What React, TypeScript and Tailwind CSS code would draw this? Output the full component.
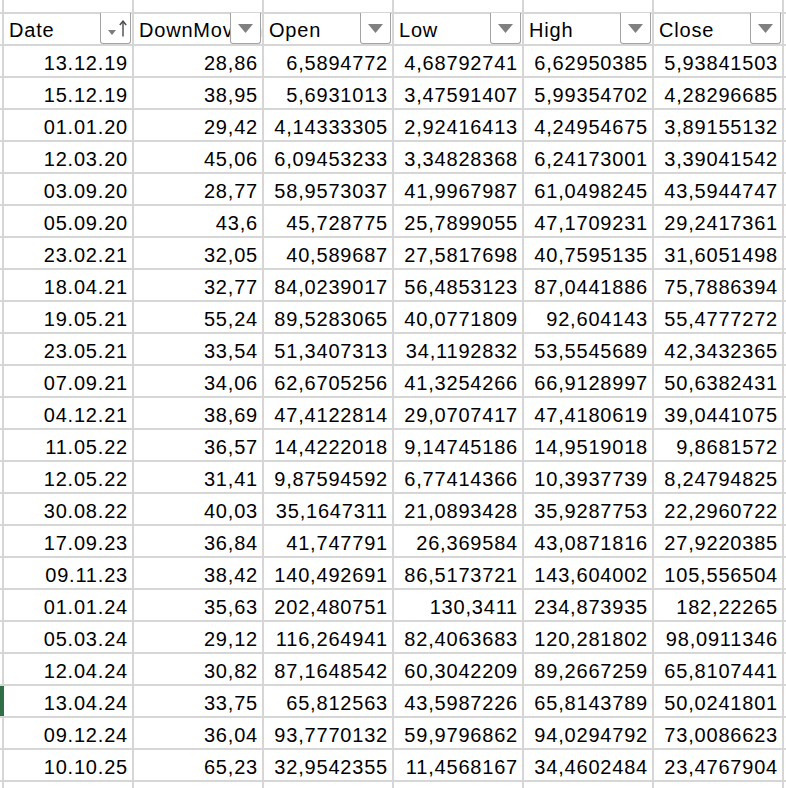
const columns = ['Date', 'DownMovement', 'Open', 'Low', 'High', 'Close']

const rows: string[][] = [
  ['13.12.19', '28,86', '6,5894772', '4,68792741', '6,62950385', '5,93841503'],
  ['15.12.19', '38,95', '5,6931013', '3,47591407', '5,99354702', '4,28296685'],
  ['01.01.20', '29,42', '4,14333305', '2,92416413', '4,24954675', '3,89155132'],
  ['12.03.20', '45,06', '6,09453233', '3,34828368', '6,24173001', '3,39041542'],
  ['03.09.20', '28,77', '58,9573037', '41,9967987', '61,0498245', '43,5944747'],
  ['05.09.20', '43,6', '45,728775', '25,7899055', '47,1709231', '29,2417361'],
  ['23.02.21', '32,05', '40,589687', '27,5817698', '40,7595135', '31,6051498'],
  ['18.04.21', '32,77', '84,0239017', '56,4853123', '87,0441886', '75,7886394'],
  ['19.05.21', '55,24', '89,5283065', '40,0771809', '92,604143', '55,4777272'],
  ['23.05.21', '33,54', '51,3407313', '34,1192832', '53,5545689', '42,3432365'],
  ['07.09.21', '34,06', '62,6705256', '41,3254266', '66,9128997', '50,6382431'],
  ['04.12.21', '38,69', '47,4122814', '29,0707417', '47,4180619', '39,0441075'],
  ['11.05.22', '36,57', '14,4222018', '9,14745186', '14,9519018', '9,8681572'],
  ['12.05.22', '31,41', '9,87594592', '6,77414366', '10,3937739', '8,24794825'],
  ['30.08.22', '40,03', '35,1647311', '21,0893428', '35,9287753', '22,2960722'],
  ['17.09.23', '36,84', '41,747791', '26,369584', '43,0871816', '27,9220385'],
  ['09.11.23', '38,42', '140,492691', '86,5173721', '143,604002', '105,556504'],
  ['01.01.24', '35,63', '202,480751', '130,3411', '234,873935', '182,22265'],
  ['05.03.24', '29,12', '116,264941', '82,4063683', '120,281802', '98,0911346'],
  ['12.04.24', '30,82', '87,1648542', '60,3042209', '89,2667259', '65,8107441'],
  ['13.04.24', '33,75', '65,812563', '43,5987226', '65,8143789', '50,0241801'],
  ['09.12.24', '36,04', '93,7770132', '59,9796862', '94,0294792', '73,0086623'],
  ['10.10.25', '65,23', '32,9542355', '11,4568167', '34,4602484', '23,4767904'],
]

// row with the active-cell marker on the left edge
const selectedRow = 20

function FilterButton({ sorted }: { sorted?: boolean }) {
  return (
    <div className="absolute right-[1px] top-[-1px] flex h-[31px] w-[31px] items-center justify-center rounded-b-[3px] border-x-[1.5px] border-b-[1.5px] border-[#a3a3a3] bg-white">
      {sorted ? (
        <div className="flex items-center gap-[3px] pl-[3px]">
          <svg width="8" height="5" viewBox="0 0 8 5" className="mt-[8px]">
            <path d="M0 0 H8 L4 5 Z" fill="#7d7d7d" />
          </svg>
          <svg width="8" height="17" viewBox="0 0 8 17">
            <path d="M4 1.5 V16.5" stroke="#4a4a4a" strokeWidth="1.4" />
            <path d="M0.8 5 L4 1.2 L7.2 5" stroke="#4a4a4a" strokeWidth="1.4" fill="none" />
          </svg>
        </div>
      ) : (
        <svg width="15" height="9" viewBox="0 0 15 9" className="mt-[1px]">
          <path d="M0 0 H15 L7.5 9 Z" fill="#808080" />
        </svg>
      )}
    </div>
  )
}

function Spacer({ green }: { green?: boolean }) {
  return green ? (
    <div className="w-[4px] shrink-0 bg-[#2f6e46]" />
  ) : (
    <div className="w-[2px] shrink-0 border-r-2 border-[#d6d6d6] box-content bg-white" />
  )
}

export default function App() {
  return (
    <div
      className="h-[788px] w-[786px] overflow-hidden bg-white text-black"
      style={{ fontFamily: '"Liberation Sans", Arial, sans-serif' }}
    >
      {/* row above the header, only partly visible */}
      <div className="flex h-[14px] border-b-2 border-[#d6d6d6]">
        <Spacer />
        {columns.map((c) => (
          <div key={c} className="w-[130px] shrink-0 border-r-2 border-[#d6d6d6]" />
        ))}
      </div>

      {/* header */}
      <div className="flex h-[32px] border-b-2 border-[#d6d6d6]">
        <Spacer />
        {columns.map((c, i) => (
          <div
            key={c}
            className="relative flex w-[130px] shrink-0 items-center border-r-2 border-[#d6d6d6] pl-[5px] pt-[2px] text-[20px] tracking-[0.8px]"
          >
            <span className="block w-full overflow-hidden whitespace-nowrap">{c}</span>
            <FilterButton sorted={i === 0} />
          </div>
        ))}
      </div>

      {rows.map((r, ri) => (
        <div key={r[0]} className="flex h-[32px] border-b-2 border-[#d6d6d6]">
          <Spacer green={ri === selectedRow} />
          {r.map((v, ci) => (
            <div
              key={ci}
              className="flex w-[130px] shrink-0 items-center justify-end border-r-2 border-[#d6d6d6] pr-[4px] pt-[3px] text-[20px] tracking-[0.8px] whitespace-nowrap"
            >
              {v}
            </div>
          ))}
        </div>
      ))}

      <div className="flex h-[20px]">
        <Spacer />
        {columns.map((c) => (
          <div key={c} className="w-[130px] shrink-0 border-r-2 border-[#d6d6d6]" />
        ))}
      </div>
    </div>
  )
}
